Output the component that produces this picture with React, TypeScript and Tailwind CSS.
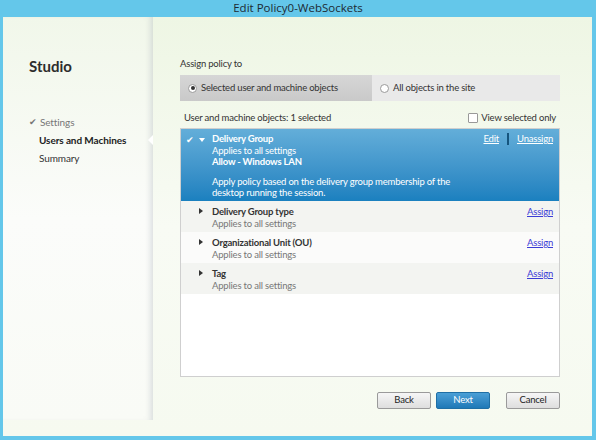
import React from "react";

type Row = { title: string; shade: boolean };

const ROWS: Row[] = [
  { title: "Delivery Group type", shade: true },
  { title: "Organizational Unit (OU)", shade: false },
  { title: "Tag", shade: true },
];

const FONT = { fontFamily: 'Lato, "Open Sans", sans-serif' };

function Caret({ down, color }: { down?: boolean; color: string }) {
  return (
    <svg width="6" height="6" viewBox="0 0 6 6" className="shrink-0">
      {down ? <path d="M0 1 L6 1 L3 5 Z" fill={color} /> : <path d="M1 0 L5 3 L1 6 Z" fill={color} />}
    </svg>
  );
}

export default function App() {
  return (
    <div className="w-[596px] h-[440px] bg-[#64c7ea] flex flex-col overflow-hidden" style={FONT}>
      <div
        className="h-[17px] flex items-center justify-center text-[11.5px] text-[#1d2a33] leading-none pb-[2px]"
        style={{ fontFamily: '"Open Sans", sans-serif' }}
      >
        Edit Policy0-WebSockets
      </div>
      <div className="flex-1 ml-[3px] mr-[4px] mb-[4px] flex bg-gradient-to-b from-[#eef6e4] via-[#f8fbf4] to-[#f6faf0]">
        {/* sidebar */}
        <div className="relative w-[150px] bg-gradient-to-b from-[#f1f7ea] via-[#fbfcfa] to-[#f9fbf6] shadow-[inset_-6px_0_6px_-4px_rgba(150,160,170,0.35)] mb-[16px]">
          <div className="pl-[26px] pt-[42px] text-[15px] font-bold text-[#2c2c2c] leading-none">Studio</div>
          <div className="pl-[26px] pt-[42px] flex flex-col gap-[6px] text-[10px] tracking-[-0.1px] leading-[12px]">
            <div className="flex items-center gap-[3px] text-[#777]">
              <span className="text-[9px]">✔</span>
              <span>Settings</span>
            </div>
            <div className="pl-[10px] font-bold text-[#222]">Users and Machines</div>
            <div className="pl-[10px] text-[#333]">Summary</div>
          </div>
          <div className="absolute right-0 top-[118px] w-0 h-0 border-y-[5px] border-y-transparent border-r-[5px] border-r-white" />
        </div>

        {/* content */}
        <div className="flex-1 pl-[27px] pr-[32px] flex flex-col text-[9.5px] tracking-[-0.2px]">
          <div className="pt-[41px] leading-[12px] text-[#333]">Assign policy to</div>
          <div className="mt-[5px] h-[26px] flex text-[#333]">
            <div className="w-[192px] bg-gradient-to-b from-[#d6d6d6] to-[#c9c9c9] flex items-center pl-[8px] gap-[4px]">
              <span className="w-[9px] h-[9px] rounded-full border border-[#9a9a9a] bg-white flex items-center justify-center">
                <span className="w-[4px] h-[4px] rounded-full bg-[#333]" />
              </span>
              <span>Selected user and machine objects</span>
            </div>
            <div className="flex-1 bg-[#e9e9e9] flex items-center pl-[8px] gap-[4px]">
              <span className="w-[9px] h-[9px] rounded-full border border-[#9a9a9a] bg-white" />
              <span>All objects in the site</span>
            </div>
          </div>

          <div className="mt-[11px] flex items-center justify-between pl-[4px] pr-[4px] leading-[12px] text-[#333]">
            <span>User and machine objects: 1 selected</span>
            <span className="flex items-center gap-[3px]">
              <span className="w-[10px] h-[10px] border border-[#999] bg-white rounded-[1px]" />
              <span>View selected only</span>
            </span>
          </div>

          <div className="mt-[4px] h-[249px] border border-[#cfcfcf] bg-white flex flex-col leading-[11.5px]">
            <div className="h-[72px] bg-gradient-to-b from-[#63aed9] to-[#1a80bf] text-white flex">
              <div className="w-[31px] flex items-start pt-[5px] pl-[5px] gap-[5px]">
                <span className="text-[9px] leading-[12px]">✔</span>
                <span className="pt-[3px]"><Caret down color="#ffffff" /></span>
              </div>
              <div className="flex-1 pt-[4px]">
                <div className="font-bold">Delivery Group</div>
                <div>Applies to all settings</div>
                <div className="font-bold">Allow - Windows LAN</div>
                <div className="mt-[8px]">Apply policy based on the delivery group membership of the</div>
                <div>desktop running the session.</div>
              </div>
              <div className="pt-[4px] pr-[6px] flex items-start gap-[8px]">
                <span className="underline">Edit</span>
                <span className="w-[2px] h-[12px] bg-[#15557e]" />
                <span className="underline">Unassign</span>
              </div>
            </div>
            {ROWS.map((row) => (
              <div key={row.title} className={`h-[31px] flex ${row.shade ? "bg-[#f3f4f1]" : "bg-[#fbfbfa]"}`}>
                <div className="w-[31px] flex justify-end pr-[8px] pt-[7px]">
                  <Caret color="#333333" />
                </div>
                <div className="flex-1 pt-[5px]">
                  <div className="font-bold text-[#333]">{row.title}</div>
                  <div className="text-[#777]">Applies to all settings</div>
                </div>
                <div className="pt-[5px] pr-[6px] text-[#3b3bd6] underline">Assign</div>
              </div>
            ))}
          </div>

          <div className="mt-[15px] flex justify-end">
            <button className="w-[54px] h-[17px] border border-[#9a9a9a] rounded-[2px] bg-gradient-to-b from-[#f6f6f6] to-[#dedede] text-[#222]">Back</button>
            <button className="ml-[5px] w-[54px] h-[17px] border border-[#1f6fa5] rounded-[2px] bg-gradient-to-b from-[#4a9fd6] to-[#1e79b7] text-white">Next</button>
            <button className="ml-[16px] w-[54px] h-[17px] border border-[#9a9a9a] rounded-[2px] bg-gradient-to-b from-[#f6f6f6] to-[#dedede] text-[#222]">Cancel</button>
          </div>
        </div>
      </div>
    </div>
  );
}
